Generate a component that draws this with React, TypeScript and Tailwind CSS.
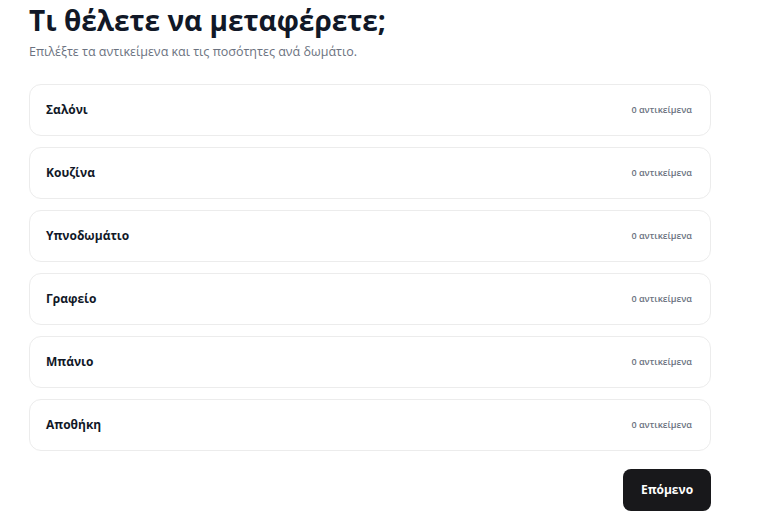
import React from "react";

const rooms = ["Σαλόνι", "Κουζίνα", "Υπνοδωμάτιο", "Γραφείο", "Μπάνιο", "Αποθήκη"];

export default function App() {
  return (
    <div className="min-h-[528px] bg-white pl-[29px] pt-[2px]" style={{ fontFamily: '"Open Sans", "Noto Sans", sans-serif' }}>
      <div className="w-[682px]">
        <h1 className="text-[28px] leading-[36px] font-bold text-[#111827]">Τι θέλετε να μεταφέρετε;</h1>
        <p className="mt-[6px] text-[12.5px] leading-[16px] text-[#6b7280]">Επιλέξτε τα αντικείμενα και τις ποσότητες ανά δωμάτιο.</p>
        <div className="mt-[24px] flex flex-col gap-[11px]">
          {rooms.map((r) => (
            <div key={r} className="h-[52px] rounded-xl border border-[#ececec] bg-white px-[16px] flex items-center justify-between">
              <span className="text-[12px] font-bold text-[#111827]">{r}</span>
              <span className="text-[9px] font-semibold text-[#6b7280] pr-[2px]">0 αντικείμενα</span>
            </div>
          ))}
        </div>
        <div className="mt-[18px] flex justify-end">
          <button className="h-[42px] w-[88px] rounded-lg bg-[#18181b] text-white text-[12px] font-bold">Επόμενο</button>
        </div>
      </div>
    </div>
  );
}
